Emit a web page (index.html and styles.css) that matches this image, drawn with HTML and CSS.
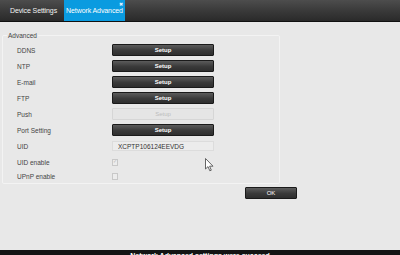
FILE: index.html
```html
<!DOCTYPE html>
<html lang="en">
<head>
  <meta charset="UTF-8">
  <meta name="viewport" content="width=device-width, initial-scale=1.0">
  <title>Network Advanced</title>
  <link rel="stylesheet" href="styles.css">
</head>
<body>
  <div class="topbar">
    <div class="tab">Device Settings</div>
    <div class="tab active">Network Advanced<span class="close">&#x2716;</span></div>
  </div>
  <div class="main">
    <fieldset class="group">
      <legend>Advanced</legend>
      <div class="rows">
        <label>DDNS</label><button class="btn">Setup</button>
        <label>NTP</label><button class="btn">Setup</button>
        <label>E-mail</label><button class="btn">Setup</button>
        <label>FTP</label><button class="btn">Setup</button>
        <label>Push</label><button class="btn" disabled>Setup</button>
        <label>Port Setting</label><button class="btn">Setup</button>
        <label>UID</label><input class="uid" type="text" value="XCPTP106124EEVDG" readonly>
        <label>UID enable</label><span><input class="chk" type="checkbox" checked disabled></span>
        <label>UPnP enable</label><span><input class="chk" type="checkbox"></span>
      </div>
    </fieldset>
    <div class="actions">
      <button class="btn ok">OK</button>
    </div>
  </div>
  <div class="status">Network Advanced settings were succeed</div>
  <svg class="cursor" width="9" height="14" viewBox="0 0 9 14">
    <path d="M0.5 0.5 L0.5 11 L3 8.6 L4.8 12.8 L6.3 12.2 L4.6 8.2 L8 8.2 Z" fill="#fff" stroke="#555" stroke-width="0.9"/>
  </svg>
</body>
</html>
```

FILE: styles.css
```css
body { margin: 0; width: 400px; height: 255px; overflow: hidden; background: #e8e8e8; font-family: "Liberation Sans", Arial, sans-serif; position: relative; }
.topbar { height: 21px; display: flex; padding-left: 3px; background: linear-gradient(#4d4d4d, #3a3a3a 50%, #2a2a2a); border-bottom: 1px solid #111; }
.tab { width: 61px; display: flex; align-items: center; justify-content: center; color: #f2f2f2; font-size: 7px; letter-spacing: -0.1px; position: relative; }
.tab.active { background: #0a9be0; color: #fff; }
.close { position: absolute; top: 1px; right: 2px; font-size: 5px; color: #e8f4ff; }
.main { padding: 10px 0 0 2px; height: 218px; }
.group { width: 262px; margin: 0; padding: 3px 0 0 14px; border: 1px solid #f3f3f3; border-radius: 2px; }
.group legend { font-size: 6.5px; color: #444; padding: 0 1px; margin-left: -10px; }
.rows { display: grid; grid-template-columns: 95px 102px; grid-template-rows: repeat(8, 16px) 13px; align-items: center; }
.rows label { font-size: 6.5px; color: #444; }
.btn { height: 12px; padding: 0; border: 1px solid #1a1a1a; border-radius: 1px; background: linear-gradient(#5c5c5c, #3a3a3a 55%, #2e2e2e); color: #fff; font-family: inherit; font-size: 6px; font-weight: bold; }
.btn:disabled { background: #e5e5e5; border-color: #d6d6d6; color: #bdbdbd; font-weight: normal; }
.uid { height: 10px; width: 102px; box-sizing: border-box; margin: 0; padding: 0 5px; border: 1px solid #dcdcdc; background: #ececec; font-family: inherit; font-size: 6.5px; color: #333; }
.chk { appearance: none; width: 6px; height: 7px; margin: 0; display: block; border: 1px solid #c8c8c8; background: #ececec; box-sizing: border-box; position: relative; }
.chk:checked::after { content: "\2713"; position: absolute; left: 0; top: -2px; font-size: 5px; color: #b8b8b8; }
.actions { display: flex; justify-content: flex-end; padding: 3px 103px 0 0; }
.ok { width: 52px; height: 12px; font-weight: normal; }
.status { position: absolute; left: 0; right: 0; bottom: 0; height: 5px; background: #141414; color: #fff; font-size: 7px; font-weight: bold; text-align: center; line-height: 12px; overflow: hidden; }
.cursor { position: absolute; left: 205px; top: 158px; }
```
